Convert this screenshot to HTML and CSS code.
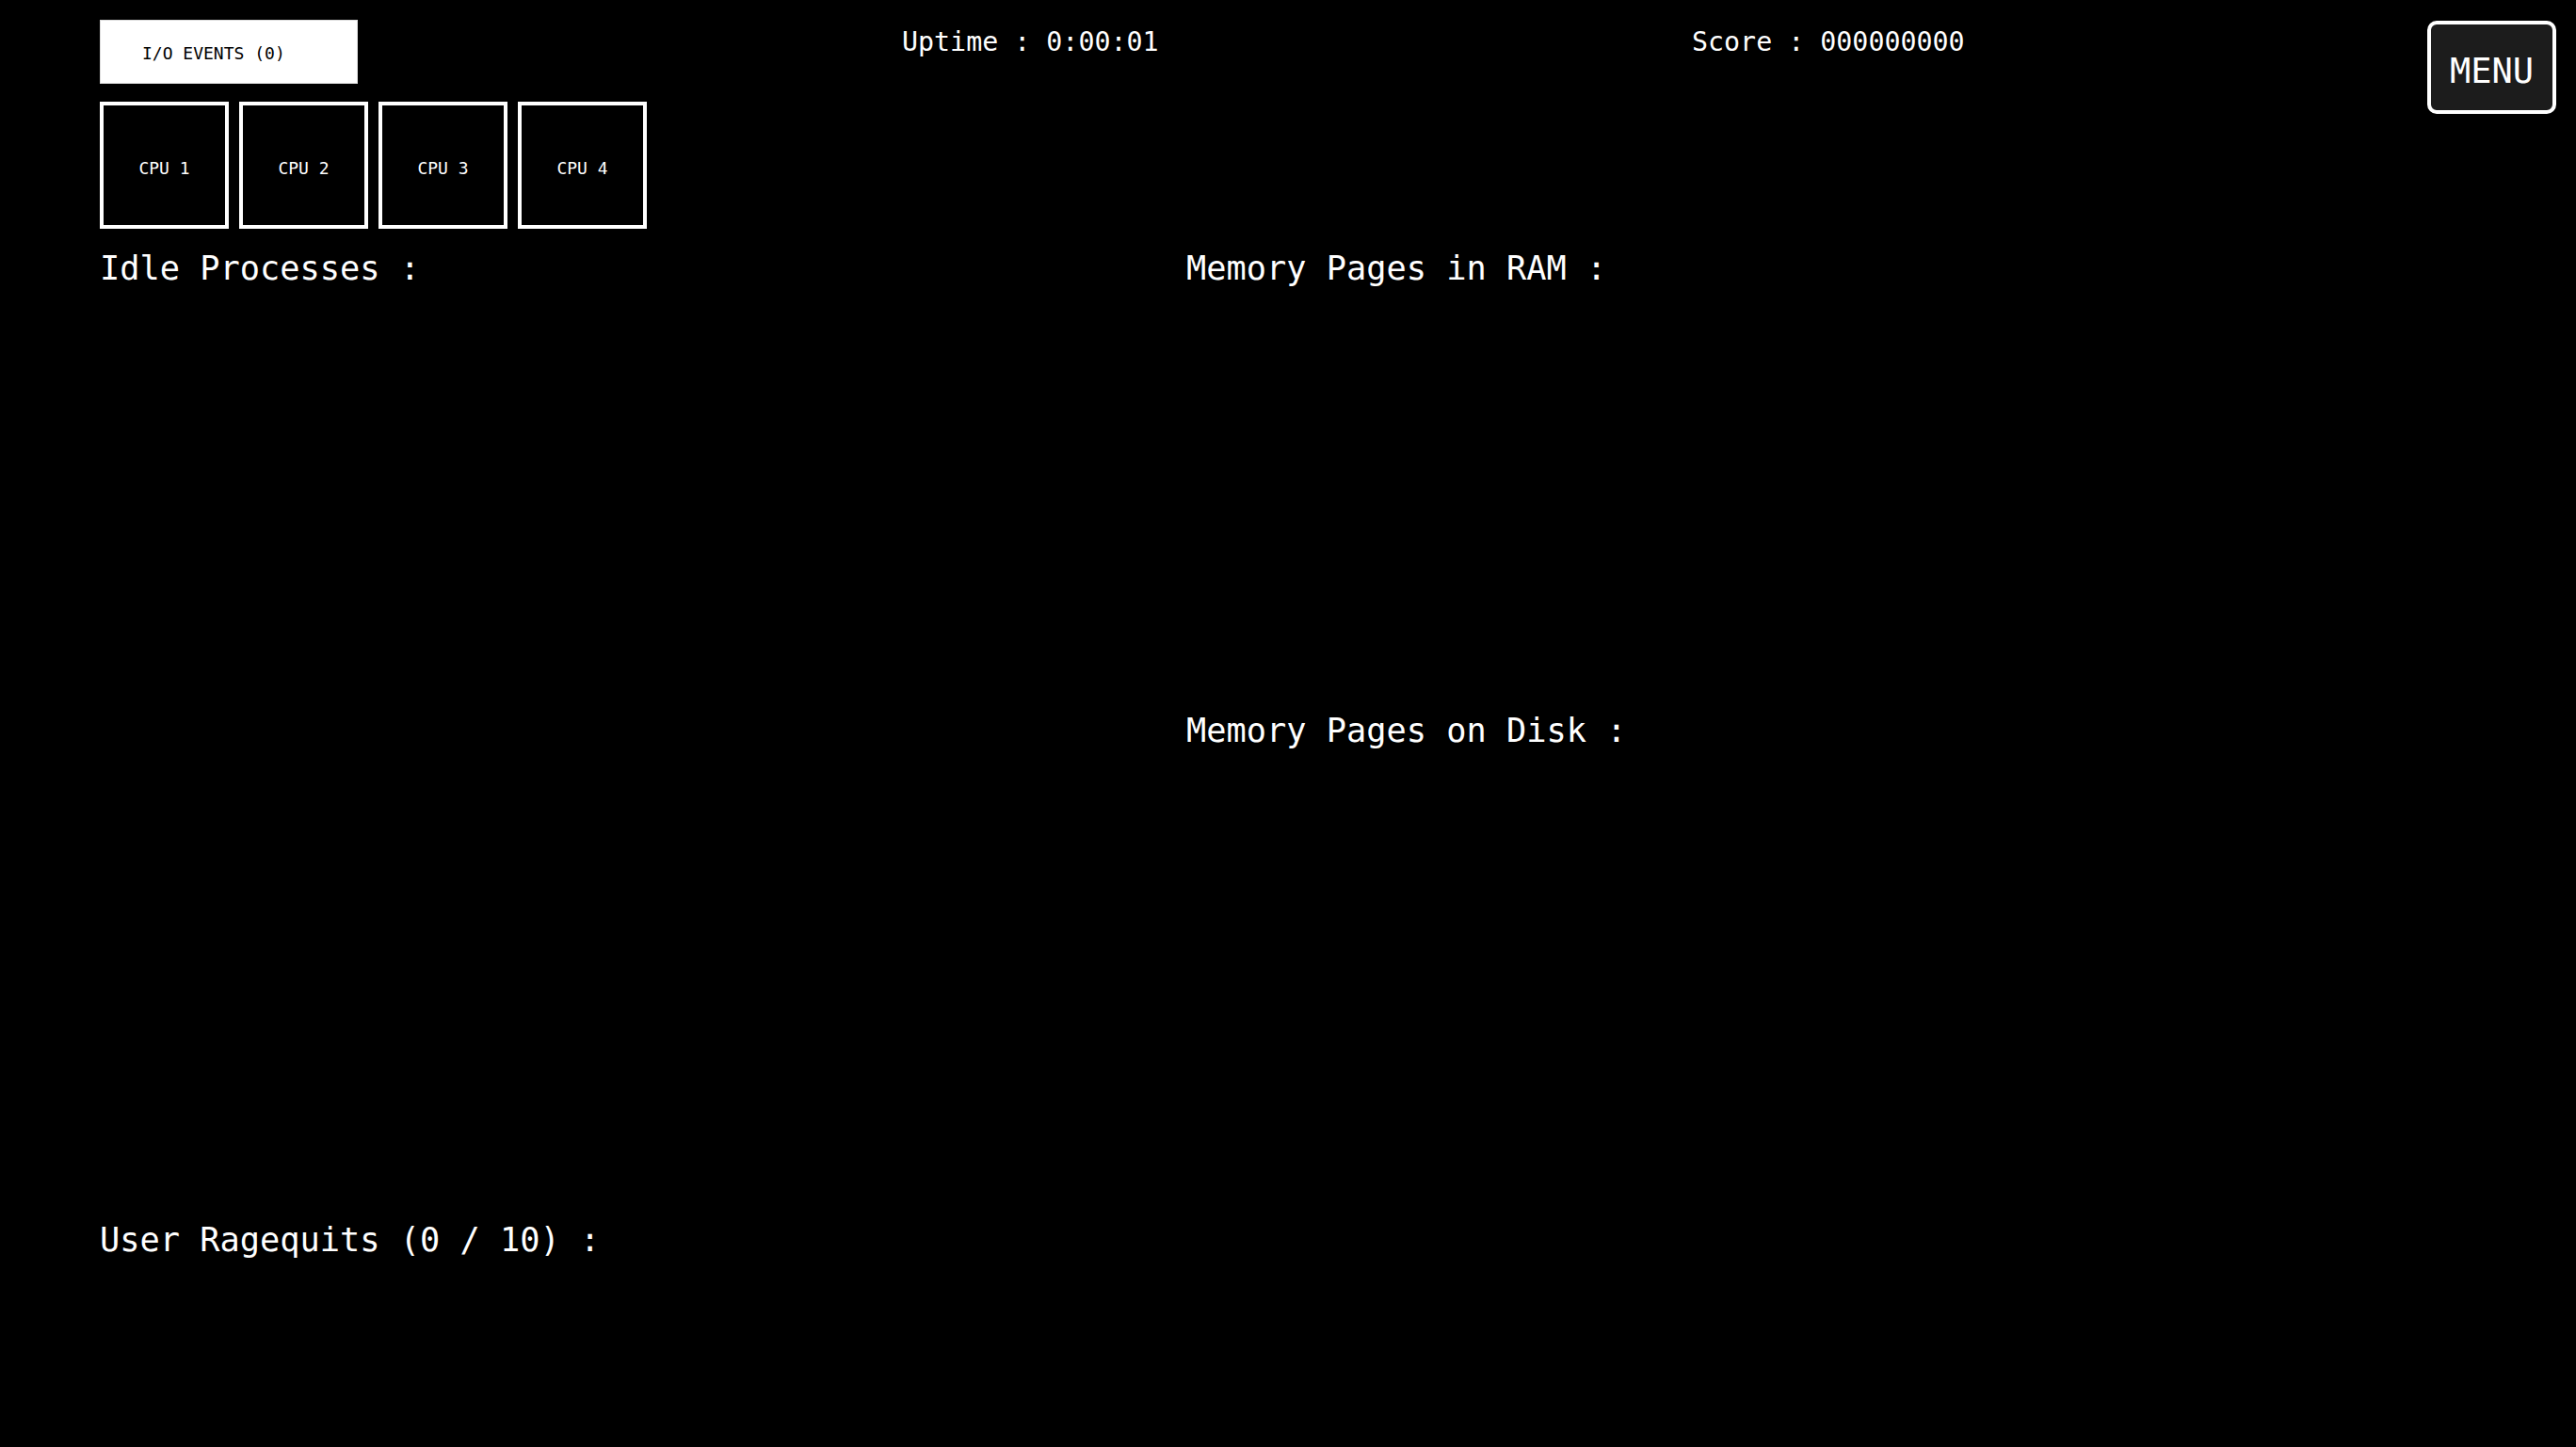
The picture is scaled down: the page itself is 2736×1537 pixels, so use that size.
FILE: index.html
```html
<!DOCTYPE html>
<html lang="en">
<head>
<meta charset="utf-8">
<title>OS Game</title>
<link rel="stylesheet" href="styles.css">
</head>
<body>
<div class="screen">
  <header class="top">
    <div class="left-panel">
      <button class="io-btn">I/O EVENTS (0)</button>
      <div class="cpus">
        <div class="cpu">CPU 1</div>
        <div class="cpu">CPU 2</div>
        <div class="cpu">CPU 3</div>
        <div class="cpu">CPU 4</div>
      </div>
    </div>
    <div class="uptime">Uptime : 0:00:01</div>
    <div class="score">Score : 000000000</div>
    <button class="menu-btn">MENU</button>
  </header>
  <main class="main">
    <section class="col col-left">
      <h2 class="heading">Idle Processes :</h2>
      <div class="processes"></div>
      <h2 class="heading">User Ragequits (0 / 10) :</h2>
    </section>
    <section class="col col-right">
      <h2 class="heading">Memory Pages in RAM :</h2>
      <div class="ram"></div>
      <h2 class="heading">Memory Pages on Disk :</h2>
    </section>
  </main>
</div>
</body>
</html>
```
FILE: styles.css
```css
html, body {
  margin: 0;
  padding: 0;
  background: #000;
  color: #fff;
  font-family: "DejaVu Sans Mono", "Liberation Mono", monospace;
}
.screen {
  width: 2736px;
  height: 1537px;
  overflow: hidden;
}
.top {
  display: flex;
  align-items: flex-start;
  padding-left: 106px;
}
.left-panel {
  width: 852px;
  padding-top: 21px;
  display: flex;
  flex-direction: column;
  align-items: flex-start;
}
.io-btn {
  width: 274px;
  height: 68px;
  background: #fff;
  color: #000;
  border: 1px solid #ddd;
  font-family: inherit;
  font-size: 18px;
  text-align: left;
  padding: 2px 0 0 44px;
  margin: 0 0 19px 0;
  box-sizing: border-box;
}
.cpus {
  display: flex;
  gap: 11px;
}
.cpu {
  width: 137px;
  height: 135px;
  border: 4px solid #fff;
  box-sizing: border-box;
  display: flex;
  align-items: center;
  justify-content: center;
  padding-top: 5px;
  font-size: 18px;
}
.uptime {
  width: 839px;
  font-size: 28.3px;
  padding-top: 28px;
}
.score {
  font-size: 28.3px;
  padding-top: 28px;
}
.menu-btn {
  margin: 22px 21px 0 auto;
  width: 137px;
  height: 99px;
  background: #1c1c1c;
  color: #fff;
  border: 4px solid #fff;
  border-radius: 10px;
  font-family: inherit;
  font-size: 37px;
  padding: 8px 0 0 0;
  box-sizing: border-box;
}
.main {
  display: grid;
  grid-template-columns: 1154px 1fr;
  padding-left: 106px;
  padding-top: 21px;
}
.heading {
  margin: 0;
  font-size: 35.3px;
  font-weight: normal;
  line-height: 42px;
}
.processes {
  height: 990px;
}
.ram {
  height: 449px;
}
```
